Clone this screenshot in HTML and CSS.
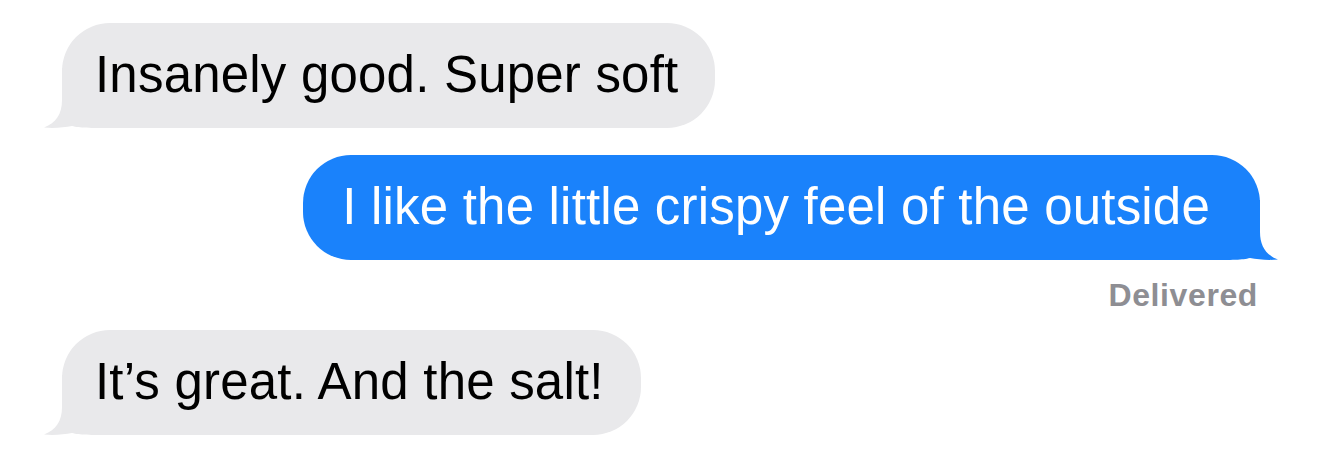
FILE: index.html
```
<!DOCTYPE html>
<html lang="en">
<head>
    <meta charset="UTF-8">
    <title>Messages</title>
    <link rel="stylesheet" href="styles.css">
</head>
<body>
    <div class="thread">
        <div class="bubble received">
            <svg class="tail" viewBox="0 0 80 60" aria-hidden="true"><path d="M18 0 L18 32 C18 46 12 55 0 59.5 C10 60.5 20 59.5 28 58 C36 60 44 60 72 60 L72 0 Z"/></svg>
            <span class="text">Insanely good. Super soft</span>
        </div>
        <div class="bubble sent">
            <svg class="tail" viewBox="0 0 80 60" aria-hidden="true"><path d="M62 0 L62 32 C62 46 68 55 80 59.5 C70 60.5 60 59.5 52 58 C44 60 36 60 8 60 L8 0 Z"/></svg>
            <span class="text">I like the little crispy feel of the outside</span>
        </div>
        <div class="status">Delivered</div>
        <div class="bubble received">
            <svg class="tail" viewBox="0 0 80 60" aria-hidden="true"><path d="M18 0 L18 32 C18 46 12 55 0 59.5 C10 60.5 20 59.5 28 58 C36 60 44 60 72 60 L72 0 Z"/></svg>
            <span class="text">It’s great. And the salt!</span>
        </div>
    </div>
</body>
</html>
```

FILE: styles.css
```
body {
    margin: 0;
    background: #fff;
    font-family: "Liberation Sans", Arial, sans-serif;
}

.thread {
    display: flex;
    flex-direction: column;
    padding: 23px 60px 0 62px;
}

.bubble {
    position: relative;
    width: fit-content;
    font-size: 51px;
    letter-spacing: 0.2px;
    line-height: 60px;
    padding: 22px 37px 23px 33px;
    border-radius: 48px;
    white-space: nowrap;
}

.bubble + .bubble {
    margin-top: 27px;
}

.text {
    position: relative;
}

.received {
    background: #e9e9eb;
    color: #000;
}

.received .tail {
    fill: #e9e9eb;
    left: -18px;
}

.sent {
    align-self: flex-end;
    background: #1a82fb;
    color: #fff;
    padding: 22px 50px 23px 39px;
}

.sent .tail {
    fill: #1a82fb;
    right: -18px;
}

.tail {
    position: absolute;
    bottom: 0;
    width: 80px;
    height: 60px;
}

.status {
    align-self: flex-end;
    margin: 16px 2px 16px 0;
    font-size: 32px;
    font-weight: bold;
    letter-spacing: 0.6px;
    line-height: 38px;
    color: #8e8e93;
}
```
